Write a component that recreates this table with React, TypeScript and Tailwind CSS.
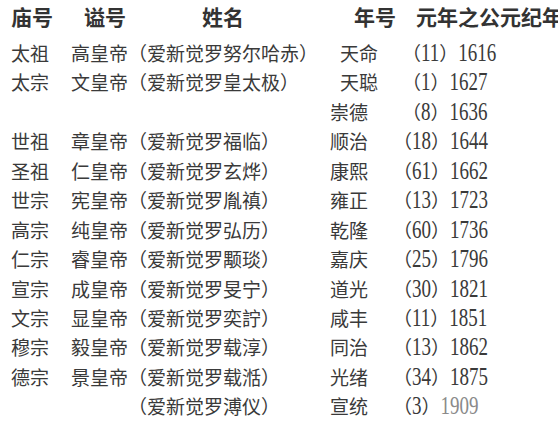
const rows = [
  { miao: "太祖", shi: "高皇帝", name: "（爱新觉罗努尔哈赤）", era: "天命", len: "11", year: "1616", eraIn: true, yearIn: true },
  { miao: "太宗", shi: "文皇帝", name: "（爱新觉罗皇太极）", era: "天聪", len: "1", year: "1627", eraIn: true, yearIn: true },
  { miao: "", shi: "", name: "", era: "崇德", len: "8", year: "1636", eraIn: false, yearIn: true },
  { miao: "世祖", shi: "章皇帝", name: "（爱新觉罗福临）", era: "顺治", len: "18", year: "1644" },
  { miao: "圣祖", shi: "仁皇帝", name: "（爱新觉罗玄烨）", era: "康熙", len: "61", year: "1662" },
  { miao: "世宗", shi: "宪皇帝", name: "（爱新觉罗胤禛）", era: "雍正", len: "13", year: "1723" },
  { miao: "高宗", shi: "纯皇帝", name: "（爱新觉罗弘历）", era: "乾隆", len: "60", year: "1736" },
  { miao: "仁宗", shi: "睿皇帝", name: "（爱新觉罗颙琰）", era: "嘉庆", len: "25", year: "1796" },
  { miao: "宣宗", shi: "成皇帝", name: "（爱新觉罗旻宁）", era: "道光", len: "30", year: "1821" },
  { miao: "文宗", shi: "显皇帝", name: "（爱新觉罗奕詝）", era: "咸丰", len: "11", year: "1851" },
  { miao: "穆宗", shi: "毅皇帝", name: "（爱新觉罗载淳）", era: "同治", len: "13", year: "1862" },
  { miao: "德宗", shi: "景皇帝", name: "（爱新觉罗载湉）", era: "光绪", len: "34", year: "1875" },
  { miao: "", shi: "", name: "（爱新觉罗溥仪）", era: "宣统", len: "3", year: "1909", faded: true },
];

// tall, narrow digits like the Song-style numerals in the screenshot
const Num = ({ children, className = "" }: { children: string; className?: string }) => (
  <span className={"inline-block scale-y-[1.28] origin-[50%_72%] " + className}>{children}</span>
);

const App = () => {
  return (
    <div className="w-[558px] h-[433px] overflow-hidden bg-white text-[#3a3a3a] font-['Liberation_Serif','Noto_Sans_CJK_SC',serif]">
      {/* header */}
      <div className="flex h-[40px] pl-[11px] text-[21px] leading-[37px] font-bold text-[#333] whitespace-nowrap">
        <div className="w-[73px] shrink-0">庙号</div>
        <div className="w-[118px] shrink-0">谥号</div>
        <div className="w-[152px] shrink-0">姓名</div>
        <div className="w-[62px] shrink-0">年号</div>
        <div className="shrink-0">元年之公元纪年</div>
      </div>

      {/* rows */}
      <div className="pl-[11px] text-[19px] leading-[29.45px] whitespace-nowrap">
        {rows.map((r, i) => (
          <div key={i} className="flex h-[29.45px]">
            <div className="w-[60px]">{r.miao}</div>
            <div className="w-[57px]">{r.shi}</div>
            <div className="w-[202px]">{r.name}</div>
            <div className={r.eraIn ? "w-[63px] pl-[10px]" : "w-[63px]"}>{r.era}</div>
            <div className={r.yearIn ? "pl-[9px]" : ""}>
              （<Num>{r.len}</Num>）
              <Num className={r.faded ? "text-[#8a8a8a]" : ""}>{r.year}</Num>
            </div>
          </div>
        ))}
      </div>
    </div>
  );
};

export default App;
